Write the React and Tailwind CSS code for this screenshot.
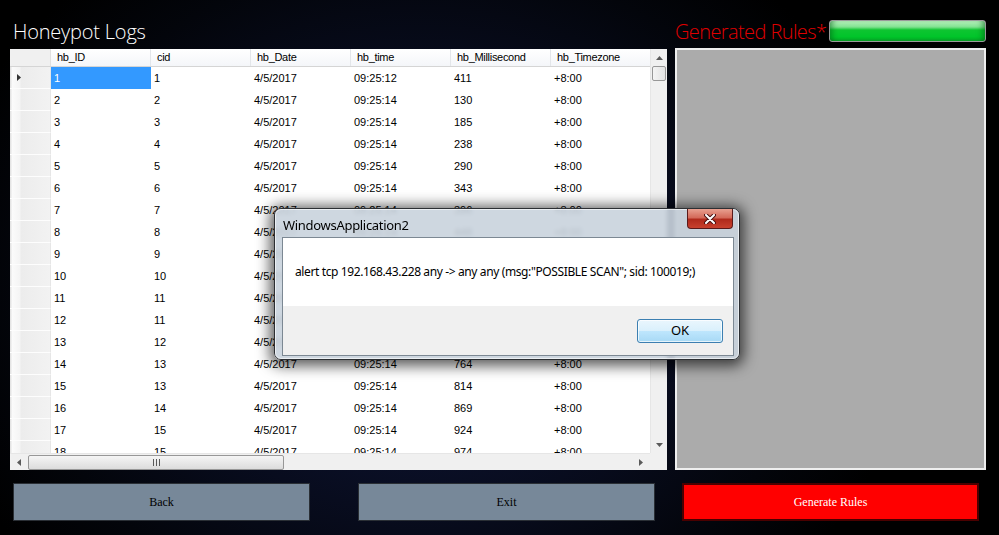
import React from "react";

const rows = [
  [1, 1, "09:25:12", 411],
  [2, 2, "09:25:14", 130],
  [3, 3, "09:25:14", 185],
  [4, 4, "09:25:14", 238],
  [5, 5, "09:25:14", 290],
  [6, 6, "09:25:14", 343],
  [7, 7, "09:25:14", 396],
  [8, 8, "09:25:14", 448],
  [9, 9, "09:25:14", 501],
  [10, 10, "09:25:14", 553],
  [11, 11, "09:25:14", 606],
  [12, 11, "09:25:14", 659],
  [13, 12, "09:25:14", 711],
  [14, 13, "09:25:14", 764],
  [15, 13, "09:25:14", 814],
  [16, 14, "09:25:14", 869],
  [17, 15, "09:25:14", 924],
  [18, 15, "09:25:14", 974],
];

const headers = ["hb_ID", "cid", "hb_Date", "hb_time", "hb_Millisecond", "hb_Timezone"];

function Tri({ dir, className, color = "#5a5a5a" }) {
  const pts = {
    up: "0,4 3.5,0 7,4",
    down: "0,0 7,0 3.5,4",
    left: "4,0 4,7 0,3.5",
    right: "0,0 0,7 4,3.5",
  }[dir];
  const w = dir === "up" || dir === "down" ? 7 : 4;
  const h = dir === "up" || dir === "down" ? 4 : 7;
  return (
    <svg width={w} height={h} viewBox={`0 0 ${w} ${h}`} className={className}>
      <polygon points={pts} fill={color} />
    </svg>
  );
}

function Grid() {
  return (
    <div className="w-[657px] h-[421px] bg-white flex flex-col font-['Liberation_Sans',Arial,sans-serif] text-[11px] text-black">
      <div className="flex flex-1 min-h-0">
        <div className="w-[640px] overflow-hidden flex flex-col">
          <div className="flex h-[18px] shrink-0 border-b border-[#d5d5d5] bg-[linear-gradient(#ffffff,#f4f6f9)]">
            <div className="w-[41px] shrink-0 bg-[#f0f0f0] border-r border-[#e0e0e0]"></div>
            {headers.map((h) => (
              <div
                key={h}
                className="w-[100px] shrink-0 pl-[6px] flex items-center border-r border-[#e3e6ea] tracking-[-0.3px]"
              >
                {h}
              </div>
            ))}
          </div>
          {rows.map((r, i) => (
            <div key={i} className="flex h-[22px] shrink-0">
              <div className="w-[41px] shrink-0 flex items-center pl-[7px] bg-[linear-gradient(90deg,#e4e4e4_0px,#e4e4e4_1px,#fbfbfb_2px,#f4f4f4_10px,#ececec_11px,#f2f2f2_100%)] border-b border-[#fdfdfd] border-r border-r-[#e6e6e6]">
                {i === 0 && <Tri dir="right" color="#333333" />}
              </div>
              <div
                className={
                  "w-[100px] shrink-0 pl-[3px] flex items-center " +
                  (i === 0 ? "bg-[#3399ff] text-white" : "")
                }
              >
                {r[0]}
              </div>
              <div className="w-[100px] shrink-0 pl-[3px] flex items-center">{r[1]}</div>
              <div className="w-[100px] shrink-0 pl-[3px] flex items-center">4/5/2017</div>
              <div className="w-[100px] shrink-0 pl-[3px] flex items-center">{r[2]}</div>
              <div className="w-[100px] shrink-0 pl-[3px] flex items-center">{r[3]}</div>
              <div className="w-[100px] shrink-0 pl-[3px] flex items-center">+8:00</div>
            </div>
          ))}
        </div>
        <div className="w-[17px] shrink-0 bg-[#f0f0f0] border-l border-[#e6e6e6] flex flex-col items-center">
          <div className="h-[17px] flex items-center justify-center">
            <Tri dir="up" />
          </div>
          <div className="w-[14px] h-[15px] rounded-[2px] border border-[#979797] bg-[linear-gradient(90deg,#f4f4f4,#e2e2e2)]"></div>
          <div className="flex-1"></div>
          <div className="h-[17px] flex items-center justify-center">
            <Tri dir="down" />
          </div>
        </div>
      </div>
      <div className="flex h-[17px] shrink-0">
        <div className="w-[640px] bg-[#f0f0f0] border-t border-[#e6e6e6] flex items-center">
          <div className="w-[18px] flex items-center justify-center">
            <Tri dir="left" />
          </div>
          <div className="w-[256px] h-[15px] rounded-[2px] border border-[#979797] bg-[linear-gradient(#f5f5f5,#dcdcdc)] flex items-center justify-center gap-[2px]">
            <span className="w-px h-[7px] bg-[#5a5a5a]"></span>
            <span className="w-px h-[7px] bg-[#5a5a5a]"></span>
            <span className="w-px h-[7px] bg-[#5a5a5a]"></span>
          </div>
          <div className="flex-1"></div>
          <div className="w-[18px] flex items-center justify-center">
            <Tri dir="right" />
          </div>
        </div>
        <div className="w-[17px] bg-[#f0f0f0]"></div>
      </div>
    </div>
  );
}

function Dialog() {
  return (
    <div className="absolute left-[274px] top-[208px] w-[466px] h-[152px] rounded-[7px] border border-[#2c2f33] bg-[#c9d3dd]/90 backdrop-blur-[2px] shadow-[0_2px_14px_4px_rgba(0,0,0,0.65)] font-['Noto_Sans','Open_Sans',sans-serif] text-[12px] text-black">
      <div className="absolute inset-0 rounded-[6px] border border-white/60 pointer-events-none"></div>
      <div className="absolute left-[8px] top-[7px] text-[13px] tracking-[-0.3px]">WindowsApplication2</div>
      <div className="absolute left-[412px] top-0 w-[46px] h-[20px] rounded-b-[4px] border border-t-0 border-[#5a1a1a] bg-[linear-gradient(#e8a090_0%,#d46a5a_45%,#b02a1c_55%,#c8412e_100%)] flex items-center justify-center">
        <svg width="12" height="10" viewBox="0 0 12 10">
          <path d="M2 1 L10 9 M10 1 L2 9" stroke="#4a1010" strokeWidth="4" strokeLinecap="round" />
          <path d="M2 1 L10 9 M10 1 L2 9" stroke="#ffffff" strokeWidth="2" strokeLinecap="round" />
        </svg>
      </div>
      <div className="absolute left-[7px] top-[28px] w-[452px] h-[119px] border border-[#7c8893] bg-white flex flex-col">
        <div className="h-[68px] flex items-center pl-[12px] tracking-[-0.38px] whitespace-nowrap">
          alert tcp 192.168.43.228 any -&gt; any any (msg:&quot;POSSIBLE SCAN&quot;; sid: 100019;)
        </div>
        <div className="flex-1 bg-[#f0f0f0] flex items-end justify-end pr-[10px] pb-[12px]">
          <div className="w-[86px] h-[24px] rounded-[3px] border border-[#3c7fb1] bg-[linear-gradient(#eaf6fd_0%,#d9f0fc_50%,#bee6fd_51%,#a7d9f5_100%)] shadow-[inset_0_0_0_1px_rgba(255,255,255,0.7)] flex items-center justify-center text-[13px]">
            OK
          </div>
        </div>
      </div>
    </div>
  );
}

export default function App() {
  return (
    <div className="relative w-[999px] h-[535px] overflow-hidden bg-[radial-gradient(ellipse_500px_420px_at_42%_55%,#121a3a_0%,#0a0f26_40%,#03050b_80%,#000_100%)] flex flex-col">
      <div className="h-[49px] flex items-end shrink-0">
        <div className="w-[675px] pl-[13px] pb-[7px] text-white text-[20px] leading-none font-['Open_Sans',sans-serif] font-light tracking-[-0.2px] whitespace-nowrap">
          Honeypot Logs
        </div>
        <div className="flex items-end pb-[6px]">
          <div className="w-[154px] pb-px text-[#e00000] text-[20px] leading-none font-['Open_Sans',sans-serif] font-light tracking-[-0.6px] whitespace-nowrap">
            Generated Rules*
          </div>
          <div className="w-[157px] h-[22px] mb-px rounded-[3px] border border-[#9a9a9a] bg-[linear-gradient(#bdf5c3_0%,#7fe28f_30%,#0ec531_45%,#00c52a_80%,#0aa528_100%)] shadow-[inset_6px_0_6px_-4px_rgba(0,90,20,0.6),inset_-6px_0_6px_-4px_rgba(0,90,20,0.6)]"></div>
        </div>
      </div>
      <div className="flex h-[421px] shrink-0">
        <div className="ml-[10px]">
          <Grid />
        </div>
        <div className="ml-[8px] -mt-px w-[311px] h-[422px] bg-[#ababab] border-2 border-[#eeeeee]"></div>
      </div>
      <div className="flex mt-[13px] h-[38px] shrink-0 font-['Liberation_Serif','Times_New_Roman',serif] text-[12px]">
        <div className="ml-[13px] w-[297px] bg-[#778899] border border-[#2a2f35] flex items-center justify-center text-black">
          Back
        </div>
        <div className="ml-[48px] w-[297px] bg-[#778899] border border-[#2a2f35] flex items-center justify-center text-black">
          Exit
        </div>
        <div className="ml-[27px] w-[297px] bg-[#ff0000] border-2 border-[#4a0000] flex items-center justify-center text-white">
          Generate Rules
        </div>
      </div>
      <Dialog />
    </div>
  );
}
